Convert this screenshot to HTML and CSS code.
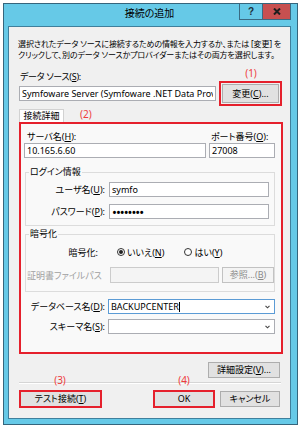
FILE: index.html
```html
<!DOCTYPE html>
<html lang="ja">
<head>
    <meta charset="UTF-8">
    <meta name="viewport" content="width=device-width, initial-scale=1.0">
    <title>接続の追加</title>
    <link rel="stylesheet" href="styles.css">
</head>
<body>
    <div class="window">
        <div class="titlebar">
            <span class="title">接続の追加</span>
            <div class="caption-buttons">
                <span class="cap-btn help">?</span>
                <span class="cap-btn close">
                    <svg width="8" height="7" viewBox="0 0 8 7"><path d="M1 0.5 L7 6.5 M7 0.5 L1 6.5" stroke="#1e1e1e" stroke-width="2"/></svg>
                </span>
            </div>
        </div>

        <div class="content">
            <p class="desc">選択されたデータ ソースに接続するための情報を入力するか、または [変更] を<br>クリックして、別のデータ ソースかプロバイダーまたはその両方を選択します。</p>

            <div class="field-label">データ ソース(<u>S</u>):</div>
            <div class="source-row">
                <input class="textbox source" type="text" value="Symfoware Server (Symfoware .NET Data Provider)" readonly>
                <div class="marked">
                    <span class="mark">(1)</span>
                    <button class="btn change">変更(<u>C</u>)...</button>
                </div>
            </div>

            <div class="tab-row">
                <span class="tab">接続詳細</span>
                <span class="tab-mark">(2)</span>
            </div>

            <div class="panel">
                <div class="server-grid">
                    <label class="top-label">サーバ名(<u>H</u>):</label>
                    <label class="top-label port-label">ポート番号(<u>O</u>):</label>
                    <input class="textbox" type="text" value="10.165.6.60" readonly>
                    <input class="textbox" type="text" value="27008" readonly>
                </div>

                <fieldset class="group login">
                    <legend>ログイン情報</legend>
                    <div class="form-grid">
                        <label>ユーザ名(<u>U</u>):</label>
                        <input class="textbox" type="text" value="symfo" readonly>
                        <label>パスワード(<u>P</u>):</label>
                        <input class="textbox password" type="password" value="symfopwd" readonly>
                    </div>
                </fieldset>

                <fieldset class="group crypt">
                    <legend>暗号化</legend>
                    <div class="radio-row">
                        <span class="radio-label">暗号化:</span>
                        <span class="radio checked"></span>
                        <span>いいえ(<u>N</u>)</span>
                        <span class="radio second"></span>
                        <span>はい(<u>Y</u>)</span>
                    </div>
                    <div class="cert-row">
                        <span class="disabled-label">証明書ファイルパス</span>
                        <input class="textbox cert-input" type="text" disabled>
                        <button class="btn browse" disabled>参照...(<u>B</u>)</button>
                    </div>
                </fieldset>

                <div class="db-grid">
                    <label>データベース名(<u>D</u>):</label>
                    <div class="combo focused">
                        <span>BACKUPCENTER</span><span class="caret"></span>
                        <svg class="chevron" width="5" height="4" viewBox="0 0 5 4"><path d="M0.5 0.8 L2.5 2.8 L4.5 0.8" fill="none" stroke="#444" stroke-width="1.1"/></svg>
                    </div>
                    <label>スキーマ名(<u>S</u>):</label>
                    <div class="combo">
                        <svg class="chevron" width="5" height="4" viewBox="0 0 5 4"><path d="M0.5 0.8 L2.5 2.8 L4.5 0.8" fill="none" stroke="#444" stroke-width="1.1"/></svg>
                    </div>
                </div>
            </div>

            <div class="advanced-row">
                <button class="btn advanced">詳細設定(<u>V</u>)...</button>
            </div>
            <div class="separator"></div>

            <div class="footer">
                <div class="marked">
                    <span class="mark">(3)</span>
                    <button class="btn test">テスト接続(<u>T</u>)</button>
                </div>
                <div class="marked ok-wrap">
                    <span class="mark">(4)</span>
                    <button class="btn ok">OK</button>
                </div>
                <button class="btn cancel">キャンセル</button>
            </div>

            <span class="grip"></span>
        </div>
    </div>
</body>
</html>
```

FILE: styles.css
```css
body {
    margin: 0;
    background: #fff;
    color: #000;
    font-family: "Noto Sans", "Noto Sans CJK JP", sans-serif;
    font-size: 9px;
    font-feature-settings: "palt";
}
.window {
    width: 295px;
    height: 422px;
    margin: 3px 0 0 3px;
    box-sizing: border-box;
    border: 1px solid #35657c;
    background: #66c9e7;
    padding: 0 6px 5px 4px;
    display: flex;
    flex-direction: column;
}

/* title bar */
.titlebar {
    flex-shrink: 0;
    height: 22px;
    display: grid;
    grid-template-columns: 1fr auto 1fr;
}
.title {
    grid-column: 2;
    font-size: 10px;
    line-height: 19px;
}
.caption-buttons {
    grid-column: 3;
    justify-self: end;
    display: flex;
    height: 16px;
}
.cap-btn {
    box-sizing: border-box;
    height: 16px;
    display: flex;
    align-items: center;
    justify-content: center;
    border: 1px solid #3a6a82;
    border-top: none;
}
.help {
    width: 23px;
    border-right: none;
    font-family: "Liberation Sans", sans-serif;
    font-weight: bold;
    font-size: 10px;
    color: #1c2f3a;
}
.close {
    width: 29px;
    background: #c75050;
}

/* dialog body */
.content {
    flex: 1;
    position: relative;
    display: flex;
    flex-direction: column;
    background: #f0f0f0;
    border: 1px solid #3f7f9c;
    padding: 0 10px;
}
.desc {
    margin: 11px 0 0 -1px;
    font-size: 8px;
    letter-spacing: -0.1px;
    line-height: 11px;
    white-space: nowrap;
}
.field-label {
    margin-top: 11px;
    line-height: 11px;
    padding-left: 1px;
    letter-spacing: -0.3px;
}
.source-row {
    height: 23px;
    display: flex;
    align-items: center;
    justify-content: space-between;
}
.textbox {
    box-sizing: border-box;
    height: 15px;
    margin: 0;
    padding: 0 2px;
    border: 1px solid #abadb3;
    background: #fff;
    color: #000;
    font: inherit;
    outline: none;
}
.source {
    width: 197px;
}
.btn {
    box-sizing: border-box;
    height: 16px;
    margin: 0;
    padding: 0;
    border: 1px solid #adadad;
    background: #e1e1e1;
    color: #000;
    font: inherit;
    line-height: 14px;
}
.marked {
    position: relative;
    display: flex;
}
.mark {
    position: absolute;
    left: 50%;
    top: -16px;
    transform: translateX(-50%);
    color: #ee3c3c;
    font-size: 10px;
    line-height: 10px;
    white-space: nowrap;
}
.change {
    width: 57px;
    height: 19px;
    margin-right: 1px;
    outline: 2px solid #e5202c;
    outline-offset: 1px;
}

/* tab */
.tab-row {
    margin-top: 4px;
    height: 13px;
    display: flex;
    align-items: flex-end;
}
.tab {
    box-sizing: border-box;
    width: 45px;
    height: 13px;
    border: 1px solid #d2d2d2;
    border-bottom: none;
    background: #fff;
    text-align: center;
    line-height: 12px;
}
.tab-mark {
    align-self: flex-start;
    margin-left: 16px;
    color: #ee3c3c;
    font-size: 10px;
    line-height: 10px;
}
.panel {
    box-sizing: border-box;
    height: 232px;
    margin-right: -3px;
    padding-top: 8px;
    border: 2px solid #e5202c;
    background: #f9f9f9;
}
.server-grid {
    display: grid;
    grid-template-columns: 182px 66px;
    column-gap: 3px;
    row-gap: 1px;
    margin-left: 3px;
}
.top-label {
    line-height: 10px;
    padding-left: 3px;
}
.port-label {
    padding-left: 2px;
}

/* group boxes */
.group {
    box-sizing: border-box;
    width: 250px;
    min-width: 0;
    margin: 9px 0 0 4px;
    border: 1px solid #dcdcdc;
}
.group legend {
    margin-left: 3px;
    padding: 0 1px;
    line-height: 10px;
}
.login {
    padding: 5px 5px 6px 0;
}
.form-grid {
    display: grid;
    grid-template-columns: 79px 160px;
    column-gap: 4px;
    row-gap: 7px;
    align-items: center;
}
.form-grid label {
    text-align: right;
}
.password {
    font-size: 13px;
    letter-spacing: -1px;
}
.crypt {
    margin-top: 3px;
    padding: 7px 0 8px 0;
}
.radio-row {
    height: 12px;
    display: flex;
    align-items: center;
}
.radio-label {
    width: 72px;
    text-align: right;
}
.radio {
    box-sizing: border-box;
    width: 8px;
    height: 8px;
    margin: 0 2px 0 19px;
    border: 1px solid #333;
    border-radius: 50%;
    background: #fff;
    display: flex;
    align-items: center;
    justify-content: center;
}
.radio.second {
    margin-left: 20px;
}
.radio.checked::after {
    content: "";
    width: 4px;
    height: 4px;
    border-radius: 50%;
    background: #222;
}
.cert-row {
    margin-top: 9px;
    height: 16px;
    display: flex;
    align-items: center;
}
.disabled-label {
    width: 83px;
    padding-left: 1px;
    color: #a0a0a0;
}
.cert-input {
    width: 109px;
    height: 16px;
    background: #f4f4f4;
    border-color: #cccccc;
}
.browse {
    width: 52px;
    margin-left: 3px;
    color: #8a8a8a;
    background: #f4f4f4;
    border-color: #c2c2c2;
}

/* database rows */
.db-grid {
    display: grid;
    grid-template-columns: 84px 167px;
    column-gap: 3px;
    row-gap: 5px;
    margin-top: 7px;
    align-items: center;
}
.db-grid label {
    text-align: right;
}
.combo {
    box-sizing: border-box;
    height: 15px;
    display: flex;
    align-items: center;
    padding: 0 4px 0 2px;
    border: 1px solid #abadb3;
    background: #fff;
}
.combo.focused {
    border-color: #5b9bd5;
}
.caret {
    width: 1px;
    height: 10px;
    background: #000;
}
.chevron {
    margin-left: auto;
}

/* bottom buttons */
.advanced-row {
    display: flex;
    justify-content: flex-end;
    margin-top: 8px;
}
.advanced {
    width: 72px;
}
.separator {
    margin: 4px -1px 0 0;
    border-top: 1px solid #d5d5d5;
    border-bottom: 1px solid #fff;
}
.footer {
    display: flex;
    margin-top: 7px;
}
.test {
    width: 81px;
    margin-left: 1px;
    outline: 2px solid #e5202c;
    outline-offset: -1px;
}
.ok-wrap {
    margin-left: auto;
}
.ok {
    width: 60px;
    outline: 2px solid #e5202c;
    outline-offset: -1px;
}
.cancel {
    width: 60px;
    margin-left: 6px;
}
.grip {
    position: absolute;
    right: 1px;
    bottom: 1px;
    width: 6px;
    height: 6px;
    background-image: radial-gradient(#a8a8a8 40%, transparent 45%);
    background-size: 2px 2px;
}
```
